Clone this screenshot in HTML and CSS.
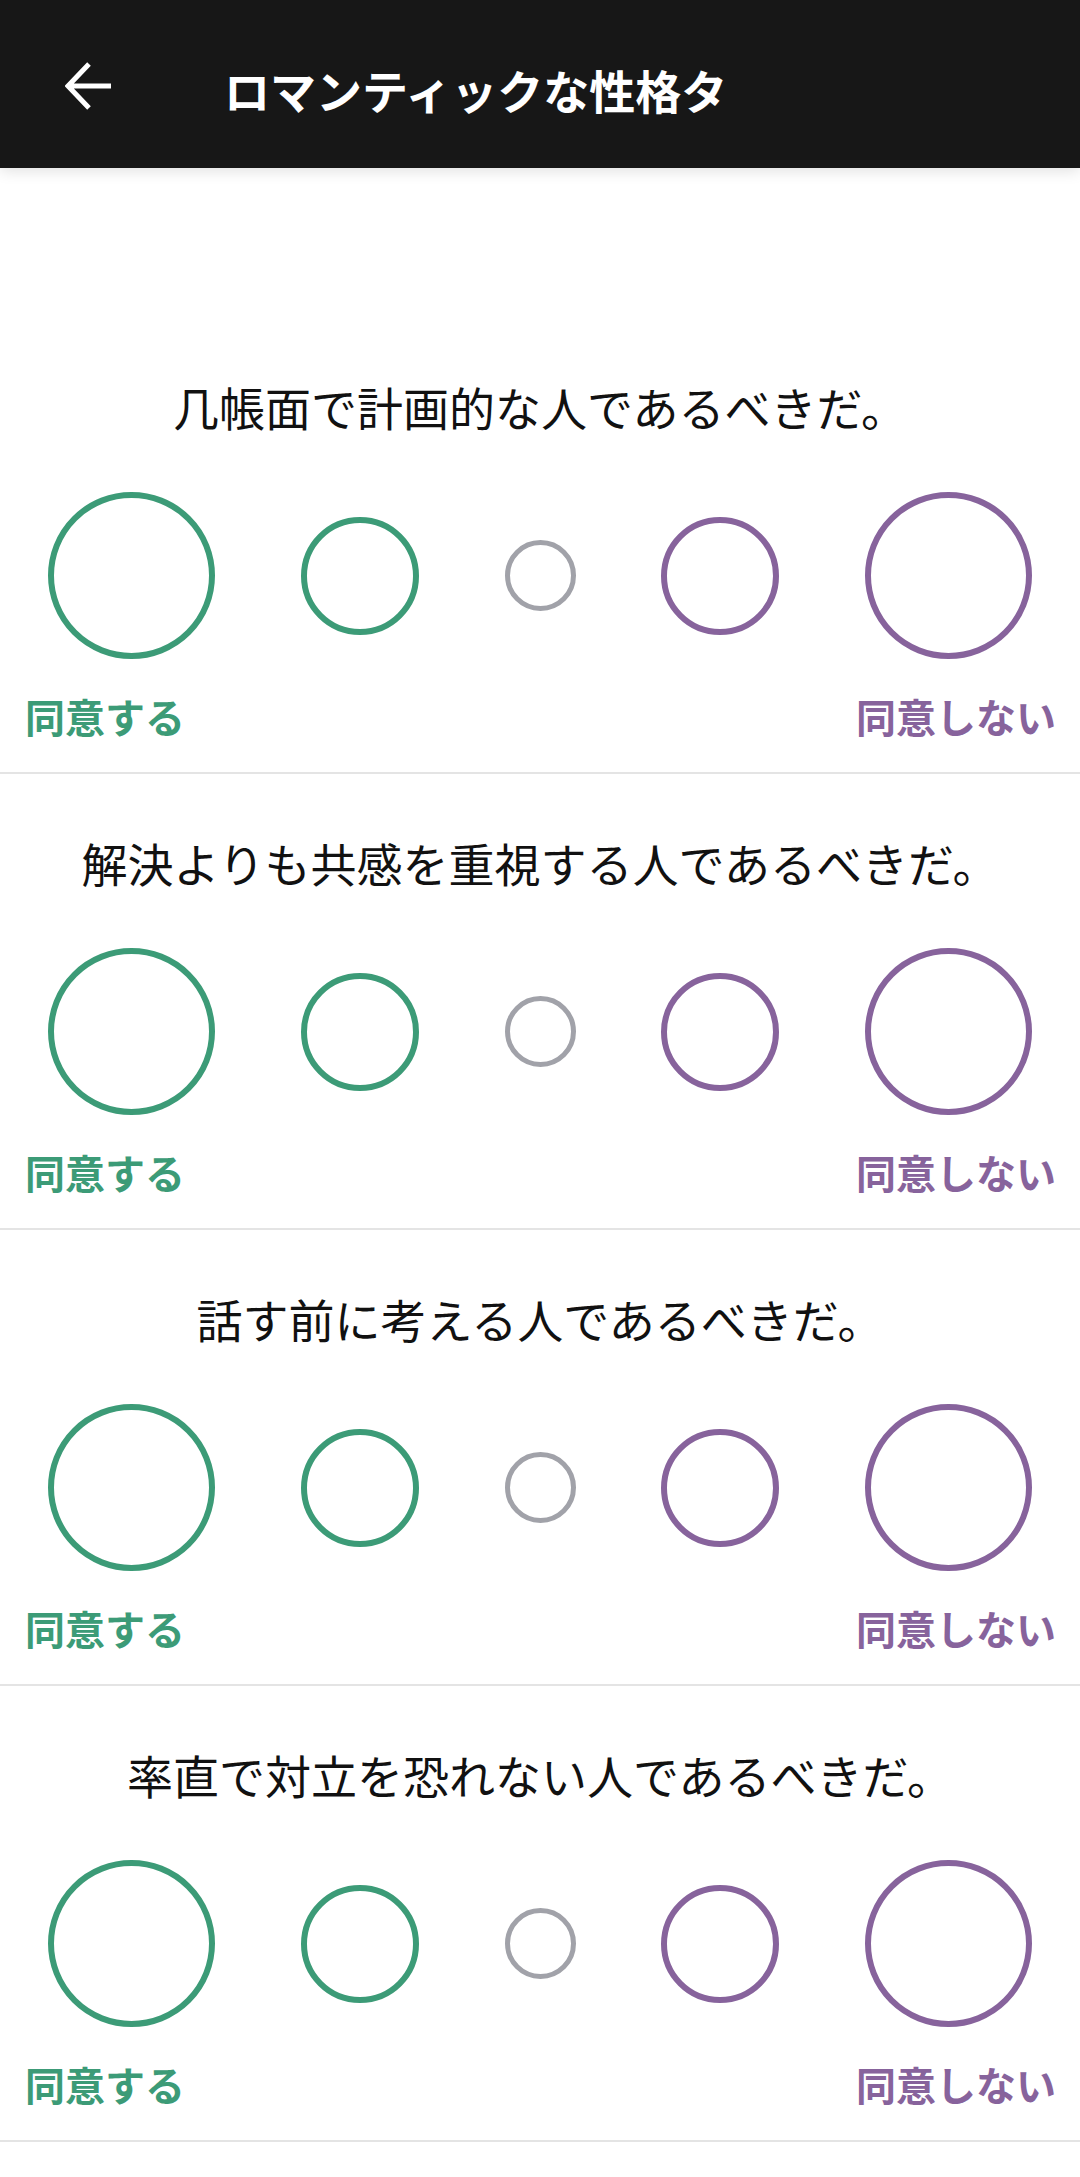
FILE: index.html
```html
<!DOCTYPE html>
<html lang="ja">
<head>
    <meta charset="UTF-8">
    <meta name="viewport" content="width=device-width, initial-scale=1.0">
    <title>ロマンティックな性格タ</title>
    <link rel="stylesheet" href="styles.css">
</head>
<body>
    <header class="topbar">
        <svg class="back" viewBox="0 0 48 48" width="48" height="48">
            <path d="M46 24 H5 M24 2 L3 24 L24 46" fill="none" stroke="#fff" stroke-width="5"/>
        </svg>
        <h1 class="title">ロマンティックな性格タ</h1>
    </header>

    <div class="spacer"></div>

    <main>
        <section class="question">
            <p class="text">几帳面で計画的な人であるべきだ。</p>
            <div class="scale">
                <span class="dot big agree"></span>
                <span class="dot mid agree"></span>
                <span class="dot small neutral"></span>
                <span class="dot mid disagree"></span>
                <span class="dot big disagree"></span>
            </div>
            <div class="labels">
                <span class="label agree-text">同意する</span>
                <span class="label disagree-text">同意しない</span>
            </div>
        </section>

        <section class="question">
            <p class="text">解決よりも共感を重視する人であるべきだ。</p>
            <div class="scale">
                <span class="dot big agree"></span>
                <span class="dot mid agree"></span>
                <span class="dot small neutral"></span>
                <span class="dot mid disagree"></span>
                <span class="dot big disagree"></span>
            </div>
            <div class="labels">
                <span class="label agree-text">同意する</span>
                <span class="label disagree-text">同意しない</span>
            </div>
        </section>

        <section class="question">
            <p class="text">話す前に考える人であるべきだ。</p>
            <div class="scale">
                <span class="dot big agree"></span>
                <span class="dot mid agree"></span>
                <span class="dot small neutral"></span>
                <span class="dot mid disagree"></span>
                <span class="dot big disagree"></span>
            </div>
            <div class="labels">
                <span class="label agree-text">同意する</span>
                <span class="label disagree-text">同意しない</span>
            </div>
        </section>

        <section class="question">
            <p class="text">率直で対立を恐れない人であるべきだ。</p>
            <div class="scale">
                <span class="dot big agree"></span>
                <span class="dot mid agree"></span>
                <span class="dot small neutral"></span>
                <span class="dot mid disagree"></span>
                <span class="dot big disagree"></span>
            </div>
            <div class="labels">
                <span class="label agree-text">同意する</span>
                <span class="label disagree-text">同意しない</span>
            </div>
        </section>
    </main>
</body>
</html>
```

FILE: styles.css
```css
body {
    font-family: "Noto Sans CJK JP", "Noto Sans", sans-serif;
    background-color: #ffffff;
    margin: 0;
    padding: 0;
}

.topbar {
    height: 168px;
    background-color: #171717;
    display: flex;
    align-items: center;
    padding-left: 65px;
    box-sizing: border-box;
    position: relative;
    z-index: 1;
    box-shadow: 0 3px 14px rgba(0, 0, 0, 0.12);
}

.back {
    display: block;
    margin-top: 4px;
    flex-shrink: 0;
}

.title {
    color: #ffffff;
    font-size: 46px;
    font-weight: bold;
    line-height: 1.2;
    margin: 12px 0 0 111px;
}

.spacer {
    height: 150px;
}

.question {
    padding: 61px 0 33px;
    border-bottom: 2px solid #e4e4e4;
}

.text {
    margin: 0;
    text-align: center;
    font-size: 46px;
    line-height: 54px;
    color: #111111;
}

.scale {
    margin-top: 59px;
    height: 167px;
    padding: 0 48px;
    display: flex;
    justify-content: space-between;
    align-items: center;
}

.dot {
    display: block;
    border-radius: 50%;
    box-sizing: border-box;
    border: 6px solid;
}

.big {
    width: 167px;
    height: 167px;
}

.mid {
    width: 118px;
    height: 118px;
}

.small {
    width: 71px;
    height: 71px;
    border-width: 5px;
}

.agree {
    border-color: #3c9b77;
}

.disagree {
    border-color: #87639c;
}

.neutral {
    border-color: #a1a2a9;
}

.labels {
    margin-top: 34px;
    padding: 0 24px 0 25px;
    display: flex;
    justify-content: space-between;
}

.label {
    font-size: 40px;
    font-weight: bold;
    line-height: 46px;
}

.agree-text {
    color: #3c9b77;
}

.disagree-text {
    color: #87639c;
}
```
